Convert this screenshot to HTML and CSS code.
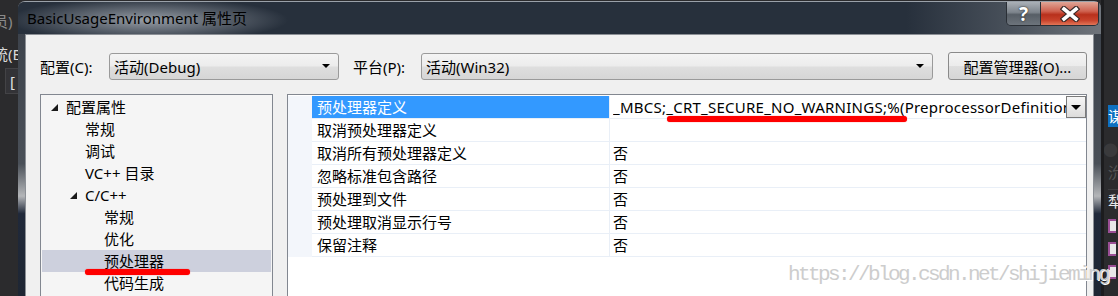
FILE: index.html
```html
<!DOCTYPE html>
<html lang="zh-cn">
<head>
    <meta charset="UTF-8">
    <title>BasicUsageEnvironment 属性页</title>
    <link rel="stylesheet" href="styles.css">
</head>
<body>
    <div class="ide-left">
        <div class="ide-text dim">员)</div>
        <div class="ide-text">统(B</div>
        <div class="ide-box">[</div>
    </div>

    <div class="dialog">
        <div class="titlebar">
            <div class="title">BasicUsageEnvironment 属性页</div>
            <div class="caption-btns">
                <div class="cap-help">?</div>
                <div class="cap-close">
                    <svg width="20" height="16" viewBox="0 0 20 16">
                        <path d="M4 3 L16 13 M16 3 L4 13" stroke="#3a2a28" stroke-width="6" stroke-linecap="square"/>
                        <path d="M4 3 L16 13 M16 3 L4 13" stroke="#fff" stroke-width="3.6" stroke-linecap="square"/>
                    </svg>
                </div>
            </div>
        </div>

        <div class="client">
            <div class="toolbar">
                <label class="lbl lbl-config">配置(C):</label>
                <div class="combo combo-config">
                    <span>活动(Debug)</span>
                    <span class="arrow"></span>
                </div>
                <label class="lbl lbl-platform">平台(P):</label>
                <div class="combo combo-platform">
                    <span>活动(Win32)</span>
                    <span class="arrow"></span>
                </div>
                <button class="btn-manager">配置管理器(O)...</button>
            </div>

            <div class="panels">
                <div class="tree">
                    <div class="node lvl1"><span class="tri"></span>配置属性</div>
                    <div class="node lvl2">常规</div>
                    <div class="node lvl2">调试</div>
                    <div class="node lvl2">VC++ 目录</div>
                    <div class="node lvl2"><span class="tri"></span>C/C++</div>
                    <div class="node lvl3">常规</div>
                    <div class="node lvl3">优化</div>
                    <div class="node lvl3 selected">预处理器</div>
                    <div class="node lvl3">代码生成</div>
                </div>

                <div class="grid">
                    <div class="prop-row">
                        <div class="gutter"></div>
                        <div class="name active">预处理器定义</div>
                        <div class="value value-edit">
                            <span class="value-text">_MBCS;_CRT_SECURE_NO_WARNINGS;%(PreprocessorDefinitions)</span>
                            <span class="drop-btn"><span class="arrow"></span></span>
                        </div>
                    </div>
                    <div class="prop-row">
                        <div class="gutter"></div>
                        <div class="name">取消预处理器定义</div>
                        <div class="value"></div>
                    </div>
                    <div class="prop-row">
                        <div class="gutter"></div>
                        <div class="name">取消所有预处理器定义</div>
                        <div class="value">否</div>
                    </div>
                    <div class="prop-row">
                        <div class="gutter"></div>
                        <div class="name">忽略标准包含路径</div>
                        <div class="value">否</div>
                    </div>
                    <div class="prop-row">
                        <div class="gutter"></div>
                        <div class="name">预处理到文件</div>
                        <div class="value">否</div>
                    </div>
                    <div class="prop-row">
                        <div class="gutter"></div>
                        <div class="name">预处理取消显示行号</div>
                        <div class="value">否</div>
                    </div>
                    <div class="prop-row">
                        <div class="gutter"></div>
                        <div class="name">保留注释</div>
                        <div class="value">否</div>
                    </div>
                </div>
            </div>
        </div>
    </div>

    <div class="ide-right">
        <div class="ide-tab">谋</div>
        <div class="ide-glyph dot">●</div>
        <div class="ide-glyph">沇</div>
        <div class="ide-glyph bright">犁</div>
        <div class="ide-icon"></div>
        <div class="ide-icon"></div>
        <div class="ide-icon"></div>
    </div>

    <!-- annotations drawn over the screenshot -->
    <div class="mark mark-tree"></div>
    <div class="mark mark-value"></div>
    <div class="watermark">https://blog.csdn.net/shijieming</div>
</body>
</html>
```

FILE: styles.css
```css
* {
    box-sizing: border-box;
}
body {
    margin: 0;
    width: 1118px;
    height: 296px;
    overflow: hidden;
    position: relative;
    display: flex;
    background: #2b2b2d;
    font-family: "Noto Sans", "Noto Sans CJK SC", sans-serif;
    font-size: 15px;
    color: #000;
}

/* IDE behind the dialog */
.ide-left {
    width: 18px;
    flex: none;
    padding-top: 11px;
    overflow: hidden;
}
.ide-text {
    height: 20px;
    line-height: 20px;
    margin-left: -7px;
    white-space: nowrap;
    color: #d8d8d8;
}
.ide-text.dim {
    color: #8a8a8a;
    margin-bottom: 13px;
}
.ide-box {
    margin: 4px 0 0 5px;
    height: 26px;
    border: 1px solid #434346;
    border-right: none;
    background: #333337;
    color: #e0e0e0;
    padding-left: 4px;
    line-height: 24px;
}
.ide-right {
    flex: 1;
    border-left: 3px solid #1c1c1e;
    padding: 105px 0 0 4px;
    overflow: hidden;
}
.ide-tab {
    height: 22px;
    background: #0e70c0;
    color: #fff;
    line-height: 22px;
    margin-bottom: 12px;
}
.ide-glyph {
    height: 22px;
    line-height: 22px;
    color: #555;
    white-space: nowrap;
}
.ide-glyph.dot {
    color: #3a3a3c;
    margin-left: -5px;
}
.ide-glyph.bright {
    color: #e8e8e8;
    margin: 6px 0 8px;
    border-top: 1px solid #3c3c3f;
}
.ide-icon {
    width: 8px;
    height: 14px;
    margin-bottom: 9px;
    border: 2px solid #9b4f96;
    border-right: none;
    background: #e8e8e8;
}

/* dialog window */
.dialog {
    width: 1083px;
    flex: none;
    margin-top: 1px;
    display: flex;
    flex-direction: column;
    border-radius: 7px 7px 0 0;
    border-top: 1px solid #9aa1a9;
    background: linear-gradient(to bottom, #3a4049 0%, #4a5058 55%, #b4b6b9 66%, #20293a 72%, #1e2633 100%);
}
.titlebar {
    height: 32px;
    display: flex;
    align-items: flex-start;
    border-radius: 6px 6px 0 0;
    background:
        radial-gradient(ellipse 140px 22px at 130px 18px, rgba(170, 176, 184, 0.85), rgba(170, 176, 184, 0) 100%),
        linear-gradient(to right, #27303c 0%, #27303c 82%, #4a525c 92%, #6f747b 100%);
}
.title {
    padding: 6px 0 0 9px;
    line-height: 20px;
    color: #000;
    white-space: nowrap;
}
.caption-btns {
    margin-left: auto;
    margin-right: 2px;
    display: flex;
    height: 24px;
    border: 1px solid #2a2f36;
    border-top: none;
    border-radius: 0 0 5px 5px;
    overflow: hidden;
}
.cap-help {
    width: 34px;
    background: linear-gradient(to bottom, #aab0b7 0%, #7d848c 45%, #575e66 55%, #6d747c 100%);
    color: #fff;
    font-weight: bold;
    font-size: 19px;
    line-height: 24px;
    text-align: center;
    text-shadow: 0 0 2px #333, 0 0 1px #222;
    border-right: 1px solid #2a2f36;
}
.cap-close {
    width: 57px;
    display: flex;
    align-items: center;
    justify-content: center;
    background: linear-gradient(to bottom, #e0a596 0%, #cf6250 40%, #b8301c 55%, #c8432c 80%, #e27557 100%);
}

.client {
    flex: 1;
    margin: 0 7px;
    background: #f0f0f0;
    border: 1px solid #8c9096;
    border-bottom: none;
    padding: 17px 0 0 14px;
    overflow: hidden;
}

/* configuration bar */
.toolbar {
    display: flex;
    align-items: center;
    height: 28px;
}
.lbl {
    white-space: nowrap;
}
.lbl-config {
    width: 69px;
}
.lbl-platform {
    width: 68px;
    margin-left: 14px;
}
.combo {
    height: 27px;
    display: flex;
    align-items: center;
    justify-content: space-between;
    padding: 0 8px 0 4px;
    border: 1px solid #9a9a9a;
    border-radius: 3px;
    background: linear-gradient(to bottom, #f4f4f4 0%, #ececec 48%, #dedede 52%, #d6d6d6 100%);
    white-space: nowrap;
}
.combo-config {
    width: 230px;
}
.combo-platform {
    width: 512px;
}
.arrow {
    width: 0;
    height: 0;
    border-left: 4px solid transparent;
    border-right: 4px solid transparent;
    border-top: 4px solid #000;
}
.btn-manager {
    width: 139px;
    height: 28px;
    margin-left: 15px;
    padding: 0;
    font: inherit;
    color: #000;
    border: 1px solid #8a8a8a;
    border-radius: 3px;
    background: linear-gradient(to bottom, #f4f4f4 0%, #ececec 48%, #dedede 52%, #d6d6d6 100%);
}

/* tree + property grid */
.panels {
    display: flex;
    gap: 14px;
    margin-top: 14px;
    height: 220px;
}
.tree {
    width: 233px;
    border: 1px solid #828790;
    border-bottom: none;
    background: #f5f5f5;
    padding: 1px;
}
.node {
    height: 22px;
    line-height: 22px;
    display: flex;
    align-items: center;
    white-space: nowrap;
}
.node.lvl1 {
    padding-left: 24px;
}
.node.lvl2 {
    padding-left: 43px;
}
.node.lvl3 {
    padding-left: 62px;
}
.node.selected {
    background: #cdd0dd;
}
.tri {
    width: 0;
    height: 0;
    margin-left: -15px;
    margin-right: 8px;
    border-left: 7px solid transparent;
    border-bottom: 7px solid #1a1a1a;
}

.grid {
    width: 800px;
    border: 1px solid #828790;
    border-bottom: none;
    background: #fff;
    padding-top: 1px;
}
.prop-row {
    display: grid;
    grid-template-columns: 24px 297px 1fr;
    height: 23px;
}
.gutter {
    background: #f3f6fb;
}
.name,
.value {
    line-height: 22px;
    border-bottom: 1px solid #e9eff7;
    white-space: nowrap;
    overflow: hidden;
}
.name {
    padding-left: 5px;
}
.name.active {
    background: #3399ff;
    color: #fff;
}
.value {
    border-left: 1px solid #e9eff7;
    padding-left: 3px;
}
.value-edit {
    display: flex;
    padding-right: 0;
}
.value-text {
    flex: 1;
    overflow: hidden;
    letter-spacing: 0.25px;
}
.drop-btn {
    width: 20px;
    height: 22px;
    flex: none;
    display: flex;
    align-items: center;
    justify-content: center;
    border: 1px solid #7a7a7a;
    background: linear-gradient(to bottom, #f6f6f6, #dcdcdc);
}
.drop-btn .arrow {
    border-left-width: 5px;
    border-right-width: 5px;
    border-top-width: 5px;
}

/* red pen marks and blog watermark */
.mark {
    position: absolute;
    height: 6px;
    border-radius: 3px;
    background: #ff0000;
    box-shadow: 0 0 1px #ff3030;
}
.mark-tree {
    left: 85px;
    top: 269px;
    width: 105px;
}
.mark-value {
    left: 667px;
    top: 116px;
    width: 240px;
}
.watermark {
    position: absolute;
    left: 788px;
    top: 264px;
    font-family: "Liberation Mono", monospace;
    font-size: 21px;
    letter-spacing: -2.6px;
    line-height: 21px;
    color: #cdcdcd;
    text-shadow: 1px 1px 0 #fff;
    white-space: nowrap;
}
```
